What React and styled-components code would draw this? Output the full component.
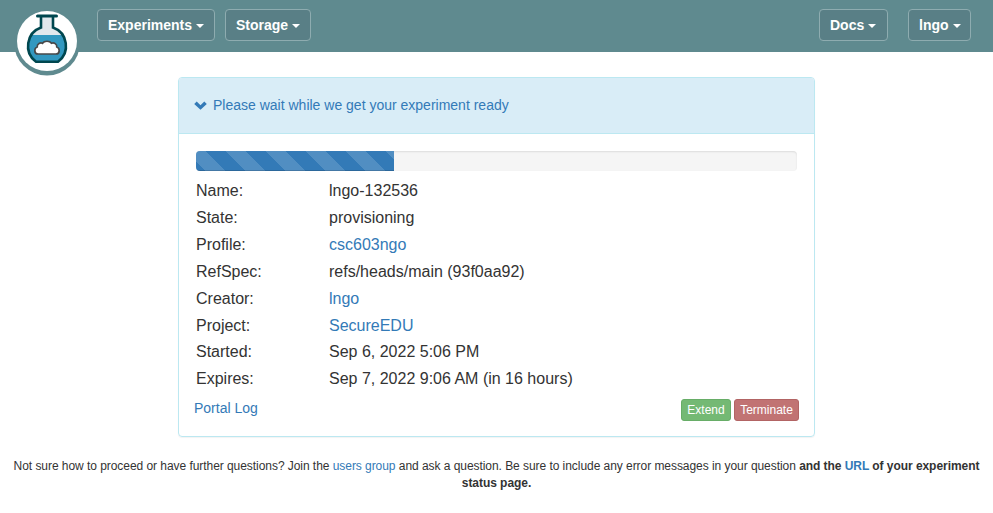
import React from "react";
import styled, { createGlobalStyle } from "styled-components";

const Global = createGlobalStyle`
  * { box-sizing: border-box; }
  body {
    margin: 0;
    background: #fff;
    color: #333;
    font: 14px/20px "Liberation Sans", Arial, sans-serif;
  }
`;

const Navbar = styled.header`
  display: flex;
  align-items: flex-start;
  height: 52px;
  padding: 9px 22px 0 14px;
  background: #5f8a8f;
`;

const Logo = styled.a`
  display: block;
  width: 66px;
  height: 66px;
  margin-right: 17px;
  svg { display: block; }
`;

const MenuButton = styled.button`
  display: flex;
  align-items: center;
  width: ${(p) => p.$width}px;
  height: 32px;
  margin: 0 0 0 ${(p) => p.$gap || 0}px;
  padding: 0 0 0 10px;
  border: 1px solid #8eacb0;
  border-radius: 4px;
  background: #597f86;
  color: #fff;
  font: bold 14px/20px "Liberation Sans", Arial, sans-serif;
`;

const Caret = styled.span`
  margin: 2px 0 0 4px;
  border-top: 4px solid #fff;
  border-left: 4px solid transparent;
  border-right: 4px solid transparent;
`;

const Spacer = styled.div`
  flex: 1;
`;

const Panel = styled.section`
  width: 637px;
  height: 360px;
  margin: 25px 0 0 178px;
  border: 1px solid #bce8f1;
  border-radius: 4px;
  box-shadow: 0 1px 1px rgba(0, 0, 0, 0.05);
`;

const PanelHeading = styled.div`
  display: flex;
  align-items: center;
  height: 56px;
  padding: 0 15px 2px;
  border-bottom: 1px solid #bce8f1;
  border-radius: 3px 3px 0 0;
  background: #d9edf7;
  color: #337ab7;
  svg { margin: 2px 6px 0 0; }
`;

const Progress = styled.div`
  height: 20px;
  margin: 17px 17px 0;
  overflow: hidden;
  border-radius: 4px;
  background: #f5f5f5;
  box-shadow: inset 0 1px 2px rgba(0, 0, 0, 0.1);
`;

const ProgressBar = styled.div`
  width: 33%;
  height: 100%;
  background: #337ab7
    linear-gradient(45deg, rgba(255, 255, 255, 0.15) 25%, transparent 25%, transparent 50%,
      rgba(255, 255, 255, 0.15) 50%, rgba(255, 255, 255, 0.15) 75%, transparent 75%, transparent)
    -10px 0 / 40px 40px;
  box-shadow: inset 0 -1px 0 rgba(0, 0, 0, 0.15);
`;

const Details = styled.dl`
  display: grid;
  grid-template-columns: 133px 1fr;
  grid-auto-rows: 26.86px;
  margin: 6.25px 17px 0;
  font-size: 16px;
  line-height: 27px;
  dt, dd { margin: 0; }
`;

const Link = styled.a`
  color: #337ab7;
  text-decoration: none;
`;

const PanelFooter = styled.div`
  display: flex;
  justify-content: space-between;
  margin: 5.85px 15px 0;
`;

const Actions = styled.div`
  display: flex;
  gap: 3px;
  padding-top: 1px;
`;

const ActionButton = styled.button`
  width: ${(p) => p.$width}px;
  height: 22px;
  padding: 0;
  border: 1px solid ${(p) => p.$border};
  border-radius: 3px;
  background: ${(p) => p.$fill};
  color: #fff;
  font: 12px/18px "Liberation Sans", Arial, sans-serif;
`;

const HelpText = styled.p`
  margin: 21px 8px 0;
  font-size: 12px;
  line-height: 17px;
  letter-spacing: -0.052px;
  text-align: center;
`;

const FlaskIcon = () => (
  <svg width="66" height="67" viewBox="0 0 66 67">
    <circle cx="33" cy="33.5" r="33" fill="#5f8a8f" />
    <circle cx="33" cy="32" r="30" fill="#fff" />
    <path d="M27 7h12v11.500A19.600 19.600 0 0 1 44 52.700H22A19.600 19.600 0 0 1 27 18.500z" fill="#e2e8ed" />
    <path d="M17 26h32A19.600 19.600 0 0 1 44 52.700H22A19.600 19.600 0 0 1 17 26z" fill="#3298c0" />
    <path d="M27 7v11.500A19.600 19.600 0 0 0 22 52.700H44A19.600 19.600 0 0 0 39 18.500V7" fill="none" stroke="#00474f" strokeWidth="2.600" />
    <path d="M23.500 7h19" stroke="#00474f" strokeWidth="3" strokeLinecap="round" />
    <path d="M24 45c-4.200 0-4-6-.8-7-.2-3.600 3.300-4.800 5.300-3.700 1.800-2.700 7.200-2.700 9 0 2.600-1.100 5.500.8 5.300 3.700 3.200 1 3.400 7-.8 7z" fill="#fff" stroke="#484848" strokeWidth="1.700" />
  </svg>
);

const ChevronIcon = () => (
  <svg width="13" height="9" viewBox="0 0 13 9">
    <path d="M.2 2.900 2.700.5l3.800 3.700L10.300.5l2.500 2.400-6.300 5.900z" fill="#337ab7" />
  </svg>
);

const details = [
  ["Name:", "lngo-132536"],
  ["State:", "provisioning"],
  ["Profile:", "csc603ngo", true],
  ["RefSpec:", "refs/heads/main (93f0aa92)"],
  ["Creator:", "lngo", true],
  ["Project:", "SecureEDU", true],
  ["Started:", "Sep 6, 2022 5:06 PM"],
  ["Expires:", "Sep 7, 2022 9:06 AM (in 16 hours)"],
];

export default function App() {
  return (
    <>
      <Global />
      <Navbar>
        <Logo><FlaskIcon /></Logo>
        <MenuButton $width={118}>Experiments<Caret /></MenuButton>
        <MenuButton $width={86} $gap={10}>Storage<Caret /></MenuButton>
        <Spacer />
        <MenuButton $width={69}>Docs<Caret /></MenuButton>
        <MenuButton $width={63} $gap={20}>lngo<Caret /></MenuButton>
      </Navbar>
      <Panel>
        <PanelHeading><ChevronIcon />Please wait while we get your experiment ready</PanelHeading>
        <Progress><ProgressBar /></Progress>
        <Details>
          {details.map(([label, value, linked]) => (
            <React.Fragment key={label}>
              <dt>{label}</dt>
              <dd>{linked ? <Link>{value}</Link> : value}</dd>
            </React.Fragment>
          ))}
        </Details>
        <PanelFooter>
          <Link>Portal Log</Link>
          <Actions>
            <ActionButton $width={50} $fill="#74b974" $border="#67ad67">Extend</ActionButton>
            <ActionButton $width={65} $fill="#c17373" $border="#b26464">Terminate</ActionButton>
          </Actions>
        </PanelFooter>
      </Panel>
      <HelpText>
        Not sure how to proceed or have further questions? Join the <Link>users group</Link> and ask a question. Be sure to include any error messages in your question <b>and the <Link>URL</Link> of your experiment status page.</b>
      </HelpText>
    </>
  );
}
